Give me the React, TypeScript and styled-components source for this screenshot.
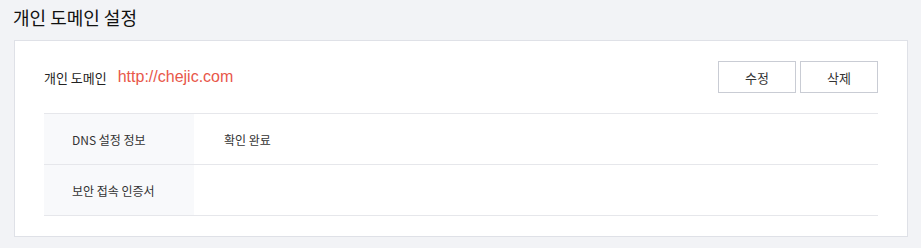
import styled, { createGlobalStyle } from 'styled-components';

const GlobalStyle = createGlobalStyle`
  body {
    margin: 0;
    background: #f2f3f6;
    font-family: 'Noto Sans CJK KR', 'Noto Sans', sans-serif;
    color: #222;
  }
`;

const rows = [
  { label: 'DNS 설정 정보', value: '확인 완료' },
  { label: '보안 접속 인증서', value: '' },
];

export default function App() {
  return (
    <>
      <GlobalStyle />
      <Page>
        <Title>개인 도메인 설정</Title>
        <Card>
          <DomainRow>
            <DomainLabel>개인 도메인</DomainLabel>
            <DomainUrl>http://chejic.com</DomainUrl>
            <Actions>
              <Button>수정</Button>
              <Button>삭제</Button>
            </Actions>
          </DomainRow>
          <InfoTable>
            {rows.map((row) => (
              <InfoRow key={row.label}>
                <InfoLabel>{row.label}</InfoLabel>
                <InfoValue>{row.value}</InfoValue>
              </InfoRow>
            ))}
          </InfoTable>
        </Card>
      </Page>
    </>
  );
}

const Page = styled.div`
  padding: 4px 14px 10px 14px;
  width: 894px;
`;

const Title = styled.h2`
  margin: 0 0 10px -1px;
  font-size: 18px;
  font-weight: 400;
  line-height: 26px;
  color: #111;
`;

const Card = styled.div`
  background: #fff;
  border: 1px solid #dfe1e7;
  padding: 20px 29px 20px 29px;
`;

const DomainRow = styled.div`
  display: flex;
  align-items: center;
  height: 32px;
  margin-bottom: 20px;
`;

const DomainLabel = styled.span`
  font-size: 13px;
  color: #222;
`;

const DomainUrl = styled.span`
  margin-left: 11px;
  font-family: 'Liberation Sans', Arial, sans-serif;
  font-size: 16px;
  color: #e8574a;
`;

const Actions = styled.div`
  margin-left: auto;
  display: flex;
  gap: 4px;
`;

const Button = styled.button`
  width: 78px;
  height: 32px;
  background: #fff;
  border: 1px solid #c9ccd4;
  font-family: inherit;
  font-size: 13px;
  color: #333;
  cursor: pointer;
`;

const InfoTable = styled.div`
  border-top: 1px solid #e6e7eb;
`;

const InfoRow = styled.div`
  display: flex;
  height: 50px;
  border-bottom: 1px solid #e6e7eb;
`;

const InfoLabel = styled.div`
  width: 150px;
  box-sizing: border-box;
  padding-left: 28px;
  display: flex;
  align-items: center;
  background: #f8f9fb;
  font-size: 12px;
  color: #333;
`;

const InfoValue = styled.div`
  padding-left: 30px;
  display: flex;
  align-items: center;
  font-size: 12px;
  color: #333;
`;
